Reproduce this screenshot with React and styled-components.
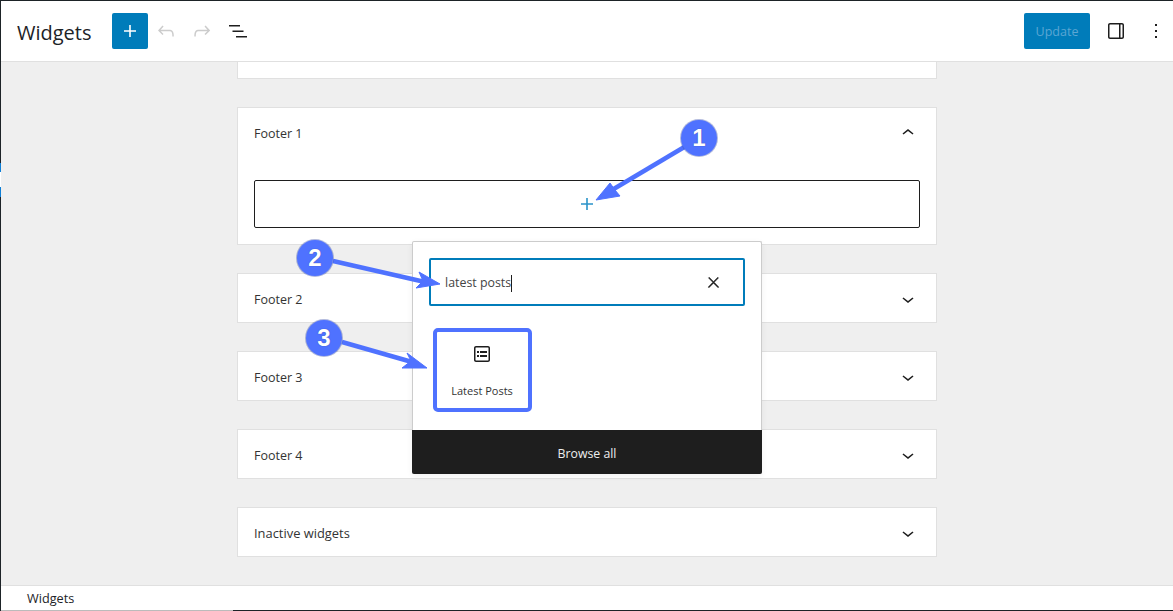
import React from "react";
import styled, { createGlobalStyle } from "styled-components";

const GlobalStyle = createGlobalStyle`
    html, body {
        margin: 0;
        padding: 0;
        background: #fff;
    }
    body {
        font-family: "Open Sans", "Noto Sans", "Liberation Sans", sans-serif;
        color: #1e1e1e;
    }
    * {
        box-sizing: border-box;
    }
`;

const Frame = styled.div`
    position: relative;
    width: 1173px;
    height: 611px;
    overflow: hidden;
    display: flex;
    flex-direction: column;
    padding: 1px 0 1px 1px;
    background:
        linear-gradient(#1d2327 0 163px, #0f7fd6 163px 172px, #fff 172px 187px, #0f7fd6 187px 197px, #1d2327 197px) left top / 1px 100% no-repeat,
        linear-gradient(90deg, #bbb 0 233px, #1d2327 233px) left bottom / 100% 1px no-repeat,
        #1d2327;
`;

const Header = styled.header`
    flex: none;
    height: 61px;
    display: flex;
    align-items: center;
    padding: 0 5px 0 16px;
    background: #fff;
    border-bottom: 1px solid #e0e0e0;
`;

const Title = styled.h1`
    margin: 0 20px 0 0;
    width: 75px;
    padding-top: 2px;
    font-size: 20px;
    font-weight: 500;
    white-space: nowrap;
    color: #1d2327;
`;

const Tools = styled.div`
    display: flex;
    align-items: center;
`;

const Spacer = styled.div`
    flex: 1;
`;

const ToolButton = styled.button`
    width: ${(p) => p.$width || 36}px;
    height: 36px;
    padding: 0;
    border: 0;
    border-radius: 2px;
    display: flex;
    align-items: center;
    justify-content: center;
    background: ${(p) => (p.$primary ? "#007cba" : "transparent")};
    color: ${(p) => p.$color || "#1e1e1e"};
    svg {
        fill: currentColor;
    }
`;

const UpdateButton = styled.button`
    width: 66px;
    height: 36px;
    margin-right: 8px;
    padding: 1px 0 0;
    border: 0;
    border-radius: 2px;
    background: #007cba;
    color: #5ba6d3;
    font-family: inherit;
    font-size: 12.5px;
`;

const Content = styled.main`
    flex: 1;
    min-height: 0;
    display: flex;
    flex-direction: column;
    align-items: center;
    gap: 28px;
    background: #efefef;
`;

const Stub = styled.div`
    width: 700px;
    height: 17px;
    flex: none;
    background: #fff;
    border: 1px solid #e0e0e0;
    border-top: 0;
`;

const Card = styled.section`
    width: 700px;
    flex: none;
    background: #fff;
    border: 1px solid #e0e0e0;
`;

const CardHead = styled.div`
    height: 48px;
    display: flex;
    align-items: center;
    justify-content: space-between;
    padding: 2px 16px 0;
    font-size: ${(p) => p.$size || 12.5}px;
    color: #333;
    svg {
        fill: #1e1e1e;
    }
`;

const CardBody = styled.div`
    padding: 24px 16px 16px;
`;

const Appender = styled.div`
    height: 48px;
    border: 1px solid #1e1e1e;
    border-radius: 2px;
    display: flex;
    align-items: center;
    justify-content: center;
    svg {
        fill: #2a93c9;
    }
`;

const StatusBar = styled.footer`
    flex: none;
    height: 25px;
    display: flex;
    align-items: center;
    padding-left: 26px;
    background: #fff;
    border-top: 1px solid #e0e0e0;
    font-size: 12.7px;
    color: #1d2327;
`;

const Popover = styled.div`
    position: absolute;
    left: 412px;
    top: 241px;
    width: 350px;
    height: 233px;
    display: flex;
    flex-direction: column;
    background: #fff;
    border: 1px solid #ccc;
    border-bottom: 0;
    border-radius: 2px;
    box-shadow: 0 2px 6px rgba(0, 0, 0, 0.06);
`;

const Search = styled.div`
    margin: 16px 16px 0;
    height: 48px;
    flex: none;
    display: flex;
    align-items: center;
    justify-content: space-between;
    padding: 2px 21px 0 14px;
    border: 2px solid #007cba;
    border-radius: 2px;
    font-size: 12.4px;
    color: #444;
    svg {
        fill: #1e1e1e;
        stroke: #1e1e1e;
        stroke-width: 0.7;
        margin-top: -1px;
    }
`;

const Caret = styled.span`
    display: inline-block;
    width: 1px;
    height: 17px;
    vertical-align: middle;
    background: #1e1e1e;
`;

const Results = styled.div`
    flex: 1;
    padding: 22px 0 0 20px;
`;

const BlockItem = styled.div`
    width: 99px;
    height: 84px;
    display: flex;
    flex-direction: column;
    align-items: center;
    padding: 10px 1px 0 0;
    border: 4px solid #4f72ff;
    border-radius: 5px;
    font-size: 11px;
    color: #333;
    svg {
        fill: #1e1e1e;
        margin-bottom: 17px;
    }
`;

const BrowseAll = styled.div`
    height: 44px;
    flex: none;
    margin: 0 -1px;
    padding-top: 2px;
    display: flex;
    align-items: center;
    justify-content: center;
    background: #1e1e1e;
    border-radius: 0 0 2px 2px;
    color: #eee;
    font-size: 12.3px;
    font-weight: 500;
`;

const Arrows = styled.svg`
    position: absolute;
    left: 0;
    top: 0;
    pointer-events: none;
`;

const Badge = styled.div`
    position: absolute;
    left: ${(p) => p.$x - 18}px;
    top: ${(p) => p.$y - 18}px;
    width: 36px;
    height: 36px;
    display: flex;
    align-items: center;
    justify-content: center;
    border-radius: 50%;
    background: #4f72ff;
    box-shadow: 0 0 0 1px rgba(60, 80, 170, 0.4);
    color: #fff;
    font-family: "Liberation Sans", Arial, sans-serif;
    font-size: 24px;
    font-weight: 700;
    text-shadow: 0 0 1px rgba(30, 40, 90, 0.6);
`;

const Icon = ({ d, size = 24 }) => (
    <svg width={size} height={size} viewBox="0 0 24 24" aria-hidden="true">
        <path d={d} />
    </svg>
);

const icons = {
    plus: "M18 11.2h-5.2V6h-1.6v5.2H6v1.6h5.2V18h1.6v-5.2H18z",
    undo: "M18.3 11.7c-.6-.6-1.4-.9-2.3-.9H6.7l2.9-3.3-1.1-1-4.5 5L8.5 16l1-1-2.7-2.7H16c.5 0 .9.2 1.3.5 1 1 1 3.4 1 4.5v.3h1.5v-.2c0-1.5 0-4.3-1.5-5.7z",
    redo: "M15.6 6.5l-1.1 1 2.9 3.3H8c-.9 0-1.7.3-2.3.9-1.4 1.5-1.4 4.2-1.4 5.6v.2h1.5v-.3c0-1.1 0-3.5 1-4.5.3-.3.7-.5 1.3-.5h9.2L14.5 15l1.1 1.1 4.6-4.6-4.6-5z",
    list: "M3 6h11v1.5H3V6zm3.5 5.5h11V13h-11v-1.5zM21 17H10v1.5h11V17z",
    sidebar: "M18 4H6c-1.1 0-2 .9-2 2v12c0 1.1.9 2 2 2h12c1.1 0 2-.9 2-2V6c0-1.1-.9-2-2-2zM6 5.5h9v13H6c-.3 0-.5-.2-.5-.5V6c0-.3.2-.5.5-.5zm12.5 12.5c0 .3-.2.5-.5.5h-1.5v-13H18c.3 0 .5.2.5.5v12z",
    more: "M13 19h-2v-2h2v2zm0-6h-2v-2h2v2zm0-6h-2V5h2v2z",
    up: "M6.5 12.4L12 8l5.5 4.4-.9 1.2L12 10l-4.5 3.6-1-1.2z",
    down: "M17.5 11.6L12 16l-5.5-4.4.9-1.2L12 14l4.5-3.6 1 1.2z",
    close: "M13 11.8l6.1-6.3-1-1-6.1 6.2-6.1-6.2-1 1 6.1 6.3-6.5 6.7 1 1 6.5-6.6 6.5 6.6 1-1z",
    posts: "M18 4H6c-1.1 0-2 .9-2 2v12c0 1.1.9 2 2 2h12c1.1 0 2-.9 2-2V6c0-1.1-.9-2-2-2zm.5 14c0 .3-.2.5-.5.5H6c-.3 0-.5-.2-.5-.5V6c0-.3.2-.5.5-.5h12c.3 0 .5.2.5.5v12zM7 11h2V9H7v2zm0 4h2v-2H7v2zm3-4h7V9h-7v2zm0 4h7v-2h-7v2z",
};

const closedCards = [
    { name: "Footer 2" },
    { name: "Footer 3" },
    { name: "Footer 4" },
    { name: "Inactive widgets", size: 12.9 },
];

const pointers = [
    { line: "686,146 612,190", head: "596,200 610,183 615,190 620,196" },
    { line: "333,261 425,282", head: "440,284 419,272 423,281 416,288" },
    { line: "342,342 412,362", head: "427,368 407,353 411,361 402,368" },
];

const App = () => (
    <Frame>
        <GlobalStyle />
        <Header>
            <Title>Widgets</Title>
            <Tools>
                <ToolButton $primary $color="#fff">
                    <Icon d={icons.plus} />
                </ToolButton>
                <ToolButton $color="#ccc">
                    <Icon d={icons.undo} />
                </ToolButton>
                <ToolButton $color="#ccc">
                    <Icon d={icons.redo} />
                </ToolButton>
                <ToolButton>
                    <Icon d={icons.list} />
                </ToolButton>
            </Tools>
            <Spacer />
            <UpdateButton>Update</UpdateButton>
            <ToolButton>
                <Icon d={icons.sidebar} />
            </ToolButton>
            <ToolButton $width={10} />
            <ToolButton $width={24}>
                <Icon d={icons.more} />
            </ToolButton>
        </Header>
        <Content>
            <Stub />
            <Card>
                <CardHead>
                    Footer 1
                    <Icon d={icons.up} />
                </CardHead>
                <CardBody>
                    <Appender>
                        <Icon d={icons.plus} />
                    </Appender>
                </CardBody>
            </Card>
            {closedCards.map((card) => (
                <Card key={card.name}>
                    <CardHead $size={card.size}>
                        {card.name}
                        <Icon d={icons.down} />
                    </CardHead>
                </Card>
            ))}
        </Content>
        <StatusBar>Widgets</StatusBar>
        <Popover>
            <Search>
                <span>
                    latest posts
                    <Caret />
                </span>
                <Icon d={icons.close} size={17} />
            </Search>
            <Results>
                <BlockItem>
                    <Icon d={icons.posts} />
                    Latest Posts
                </BlockItem>
            </Results>
            <BrowseAll>Browse all</BrowseAll>
        </Popover>
        <Arrows width="1173" height="611" viewBox="0 0 1173 611">
            {pointers.map((p) => (
                <g key={p.line} fill="#4f72ff" stroke="#4f72ff">
                    <polyline points={p.line} strokeWidth="4.5" fill="none" />
                    <polygon points={p.head} strokeWidth="1" />
                </g>
            ))}
        </Arrows>
        <Badge $x={699} $y={138}>1</Badge>
        <Badge $x={315} $y={258}>2</Badge>
        <Badge $x={324} $y={338}>3</Badge>
    </Frame>
);

export default App;
